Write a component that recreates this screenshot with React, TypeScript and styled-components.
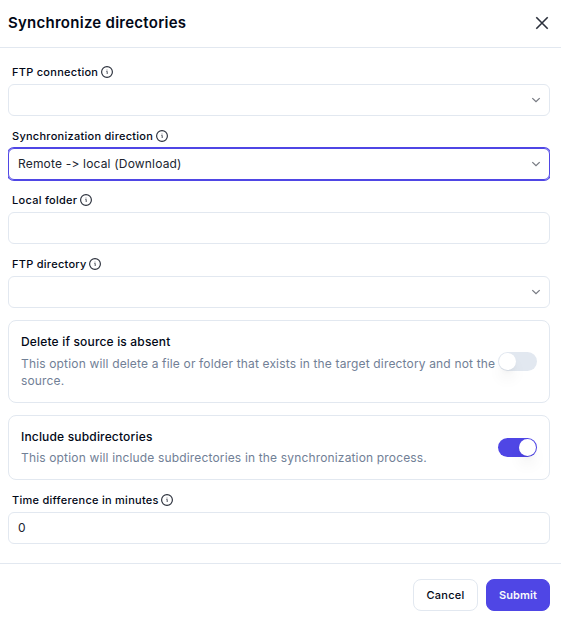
import React, { useState } from "react";
import styled, { createGlobalStyle } from "styled-components";

const GlobalStyle = createGlobalStyle`
  *, *::before, *::after { box-sizing: border-box; }
  body {
    margin: 0;
    background: #fff;
    color: #020817;
    font-family: Inter, "Liberation Sans", sans-serif;
  }
  button, input { font: inherit; color: inherit; }
`;

const Dialog = styled.form`
  display: flex;
  flex-direction: column;
  width: 561px;
  height: 621px;
  background: #fff;
`;

const Header = styled.header`
  display: flex;
  align-items: center;
  justify-content: space-between;
  height: 48px;
  padding: 0 11px 2px 8px;
  border-bottom: 1px solid #e2e8f0;
`;

const Title = styled.h2`
  margin: 0;
  font-size: 15px;
  line-height: 22px;
  font-weight: 600;
  letter-spacing: 0.26px;
`;

const CloseButton = styled.button`
  display: flex;
  padding: 0;
  border: 0;
  background: none;
  color: #2b303c;
`;

const Body = styled.div`
  display: flex;
  flex-direction: column;
  gap: 12px;
  height: 515px;
  padding: 16px 11px 0 8px;
`;

const Field = styled.div`
  display: flex;
  flex-direction: column;
`;

const Label = styled.label`
  display: flex;
  align-items: center;
  gap: 2.6px;
  height: 16px;
  margin-bottom: 4px;
  padding-left: 4px;
  font-size: 11px;
  line-height: 16px;
  font-weight: 500;
  letter-spacing: 0.27px;
  white-space: nowrap;
  svg { flex: none; color: #2b303c; }
`;

const Control = styled.div<{ $active?: boolean }>`
  display: flex;
  align-items: center;
  justify-content: space-between;
  height: 32px;
  padding: 0 8px 0 9px;
  border: 1px solid ${(p) => (p.$active ? "#4f46e5" : "#e2e8f0")};
  border-radius: 6px;
  box-shadow: ${(p) => (p.$active ? "0 0 0 1px #4f46e5" : "none")};
  clip-path: inset(-1px 0);
  font-size: 12px;
  line-height: 16px;
  letter-spacing: 0.18px;
  color: #20242f;
  svg { flex: none; color: #777a82; }
`;

const Value = styled.span`
  line-height: 16px;
`;

const TextInput = styled.input`
  flex: 1;
  min-width: 0;
  height: 16px;
  padding: 0;
  line-height: 16px;
  border: 0;
  outline: 0;
  background: none;
  letter-spacing: inherit;
`;

const OptionCard = styled.section<{ $tall?: boolean }>`
  display: flex;
  align-items: center;
  justify-content: space-between;
  height: ${(p) => (p.$tall ? 83 : 65)}px;
  padding: 0 12px;
  border: 1px solid #e2e8f0;
  border-radius: 8px;
`;

const OptionBody = styled.div`
  padding-bottom: 1px;
`;

const OptionTitle = styled.h3<{ $tall?: boolean }>`
  margin: 0 0 ${(p) => (p.$tall ? 4 : 3)}px;
  font-size: 12px;
  line-height: 18px;
  font-weight: 500;
  letter-spacing: 0.17px;
`;

const OptionText = styled.p`
  margin: 0;
  font-size: 12px;
  line-height: 17px;
  letter-spacing: 0.16px;
  color: #718096;
`;

const Switch = styled.button<{ $on: boolean }>`
  display: flex;
  flex: none;
  align-items: center;
  justify-content: ${(p) => (p.$on ? "flex-end" : "flex-start")};
  width: 39px;
  height: 19px;
  padding: 0 1px;
  border: 0;
  border-radius: 10px;
  background: ${(p) => (p.$on ? "#4f46e5" : "#e2e8f0")};
`;

const Thumb = styled.span`
  width: 17px;
  height: 17px;
  border-radius: 50%;
  background: #fff;
  box-shadow: 0 10px 15px -3px rgba(0, 0, 0, 0.1), 0 4px 6px -4px rgba(0, 0, 0, 0.1);
`;

const Footer = styled.footer`
  display: flex;
  justify-content: flex-end;
  gap: 8px;
  height: 58px;
  padding: 15px 11px 0 8px;
  border-top: 1px solid #e2e8f0;
`;

const Button = styled.button<{ $primary?: boolean }>`
  width: ${(p) => (p.$primary ? 64 : 65)}px;
  height: 32px;
  padding: 0;
  border: 1px solid ${(p) => (p.$primary ? "#4f46e5" : "#e2e8f0")};
  border-radius: 8px;
  background: ${(p) => (p.$primary ? "#4f46e5" : "#fff")};
  color: ${(p) => (p.$primary ? "#f8fafc" : "#020817")};
  font-size: 11px;
  font-weight: ${(p) => (p.$primary ? 600 : 500)};
  letter-spacing: ${(p) => (p.$primary ? 0.1 : 0.25)}px;
`;

const InfoIcon = () => (
  <svg width="12" height="12" viewBox="0 0 12 12" fill="none" stroke="currentColor">
    <circle cx="6" cy="6" r="5.4" strokeWidth="1.15" />
    <path d="M5.4 5.4H6.2V8" strokeWidth="0.85" />
    <circle cx="6" cy="4" r="0.25" strokeWidth="0.4" />
  </svg>
);

const Chevron = () => (
  <svg width="10" height="6" viewBox="0 0 10 6" fill="none" stroke="currentColor" strokeWidth="1.3">
    <path d="M1.3 1.1L5 4.6L8.7 1.1" />
  </svg>
);

const CloseIcon = () => (
  <svg width="16" height="16" viewBox="0 0 16 16" fill="none" stroke="currentColor" strokeWidth="1.6">
    <path d="M2.3 2.3L13.7 13.7M13.7 2.3L2.3 13.7" />
  </svg>
);

const FieldLabel = ({ children }: { children: string }) => (
  <Label>
    <span>{children}</span>
    <InfoIcon />
  </Label>
);

const SelectField = ({ label, value, active }: { label: string; value?: string; active?: boolean }) => (
  <Field>
    <FieldLabel>{label}</FieldLabel>
    <Control $active={active}>
      <Value>{value}</Value>
      <Chevron />
    </Control>
  </Field>
);

const InputField = ({ label, value }: { label: string; value?: string }) => (
  <Field>
    <FieldLabel>{label}</FieldLabel>
    <Control>
      <TextInput defaultValue={value} aria-label={label} />
    </Control>
  </Field>
);

type OptionProps = { title: string; text: string; initial: boolean; tall?: boolean };

const Option = ({ title, text, initial, tall }: OptionProps) => {
  const [on, setOn] = useState(initial);
  return (
    <OptionCard $tall={tall}>
      <OptionBody>
        <OptionTitle $tall={tall}>{title}</OptionTitle>
        <OptionText>{text}</OptionText>
      </OptionBody>
      <Switch type="button" role="switch" aria-label={title} aria-checked={on} $on={on} onClick={() => setOn(!on)}>
        <Thumb />
      </Switch>
    </OptionCard>
  );
};

export default function App() {
  return (
    <>
      <GlobalStyle />
      <Dialog onSubmit={(e) => e.preventDefault()}>
        <Header>
          <Title>Synchronize directories</Title>
          <CloseButton type="button" aria-label="Close">
            <CloseIcon />
          </CloseButton>
        </Header>
        <Body>
          <SelectField label="FTP connection" />
          <SelectField label="Synchronization direction" value="Remote -> local (Download)" active />
          <InputField label="Local folder" />
          <SelectField label="FTP directory" />
          <Option
            title="Delete if source is absent"
            text="This option will delete a file or folder that exists in the target directory and not the source."
            initial={false}
            tall
          />
          <Option
            title="Include subdirectories"
            text="This option will include subdirectories in the synchronization process."
            initial
          />
          <InputField label="Time difference in minutes" value="0" />
        </Body>
        <Footer>
          <Button type="button">Cancel</Button>
          <Button type="submit" $primary>Submit</Button>
        </Footer>
      </Dialog>
    </>
  );
}
